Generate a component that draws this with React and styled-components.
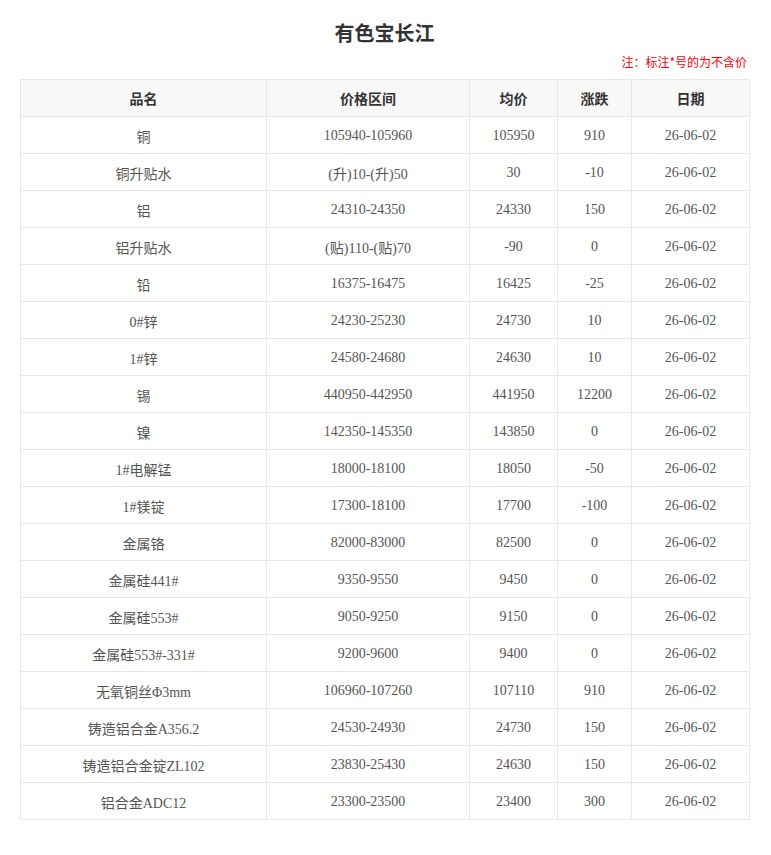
import React from 'react';
import styled, { createGlobalStyle } from 'styled-components';

const rows = [
  ['铜', '105940-105960', '105950', '910', '26-06-02'],
  ['铜升贴水', '(升)10-(升)50', '30', '-10', '26-06-02'],
  ['铝', '24310-24350', '24330', '150', '26-06-02'],
  ['铝升贴水', '(贴)110-(贴)70', '-90', '0', '26-06-02'],
  ['铅', '16375-16475', '16425', '-25', '26-06-02'],
  ['0#锌', '24230-25230', '24730', '10', '26-06-02'],
  ['1#锌', '24580-24680', '24630', '10', '26-06-02'],
  ['锡', '440950-442950', '441950', '12200', '26-06-02'],
  ['镍', '142350-145350', '143850', '0', '26-06-02'],
  ['1#电解锰', '18000-18100', '18050', '-50', '26-06-02'],
  ['1#镁锭', '17300-18100', '17700', '-100', '26-06-02'],
  ['金属铬', '82000-83000', '82500', '0', '26-06-02'],
  ['金属硅441#', '9350-9550', '9450', '0', '26-06-02'],
  ['金属硅553#', '9050-9250', '9150', '0', '26-06-02'],
  ['金属硅553#-331#', '9200-9600', '9400', '0', '26-06-02'],
  ['无氧铜丝Φ3mm', '106960-107260', '107110', '910', '26-06-02'],
  ['铸造铝合金A356.2', '24530-24930', '24730', '150', '26-06-02'],
  ['铸造铝合金锭ZL102', '23830-25430', '24630', '150', '26-06-02'],
  ['铝合金ADC12', '23300-23500', '23400', '300', '26-06-02'],
];

const columns = [
  { title: '品名', width: 246 },
  { title: '价格区间', width: 203 },
  { title: '均价', width: 88 },
  { title: '涨跌', width: 74 },
  { title: '日期', width: 118 },
];

export default function App() {
  return (
    <Page>
      <GlobalStyle />
      <Title>有色宝长江</Title>
      <Note>注：标注*号的为不含价</Note>
      <PriceTable>
        <colgroup>
          {columns.map((c) => (
            <col key={c.title} style={{ width: c.width }} />
          ))}
        </colgroup>
        <thead>
          <tr>
            {columns.map((c) => (
              <HeadCell key={c.title}>{c.title}</HeadCell>
            ))}
          </tr>
        </thead>
        <tbody>
          {rows.map((r, i) => (
            <Row key={i}>
              {r.map((v, j) => (
                <Cell key={j}>{v}</Cell>
              ))}
            </Row>
          ))}
        </tbody>
      </PriceTable>
    </Page>
  );
}

const GlobalStyle = createGlobalStyle`
  body {
    margin: 0;
    background: #fff;
    font-family: 'Liberation Serif', 'Noto Sans CJK SC', serif;
  }
`;

const Page = styled.div`
  width: 729px;
  margin: 0 auto;
  padding-top: 20px;
  position: relative;
  left: -1px;
`;

const Title = styled.h1`
  margin: 0;
  height: 26px;
  line-height: 26px;
  text-align: center;
  font-family: 'Noto Sans CJK SC', sans-serif;
  font-size: 20px;
  font-weight: 700;
  color: #333;
`;

const Note = styled.div`
  margin-top: 8px;
  height: 16px;
  line-height: 16px;
  text-align: right;
  padding-right: 2px;
  font-family: 'Noto Sans CJK SC', sans-serif;
  font-size: 12px;
  color: #f00;
`;

const PriceTable = styled.table`
  margin-top: 9px;
  width: 729px;
  border-collapse: collapse;
  table-layout: fixed;
  border: 1px solid #e8e8e8;
`;

const HeadCell = styled.th`
  height: 36px;
  padding: 0;
  border: 1px solid #e8e8e8;
  background: #f8f8f8;
  font-family: 'Noto Sans CJK SC', sans-serif;
  font-size: 14px;
  font-weight: 700;
  color: #333;
  text-align: center;
  vertical-align: middle;
`;

const Row = styled.tr`
  height: 37px;
`;

const Cell = styled.td`
  height: 35px;
  padding: 1px 0 0;
  border: 1px solid #e8e8e8;
  font-size: 14px;
  color: #555;
  text-align: center;
  vertical-align: middle;
  white-space: nowrap;
`;
